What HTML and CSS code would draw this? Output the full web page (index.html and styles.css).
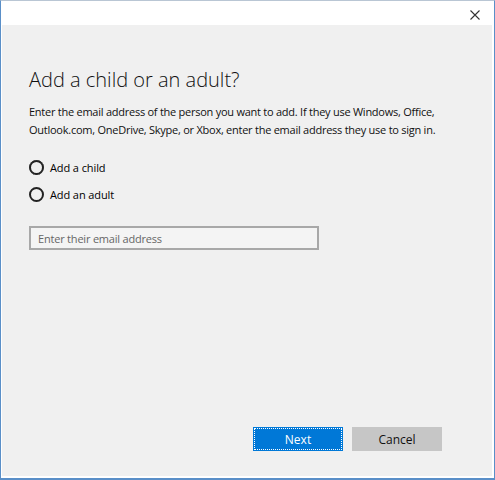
FILE: index.html
```html
<!DOCTYPE html>
<html lang="en">
<head>
    <meta charset="UTF-8">
    <title>Add a child or an adult</title>
    <link rel="stylesheet" href="styles.css">
</head>
<body>

<div class="window">
    <div class="titlebar">
        <button class="close" aria-label="Close">
            <svg width="10" height="10" viewBox="0 0 10 10">
                <path d="M0.5 0.5 L9.5 9.5 M9.5 0.5 L0.5 9.5" stroke="#333" stroke-width="1.1" fill="none"/>
            </svg>
        </button>
    </div>

    <div class="content">
        <h1 class="heading">Add a child or an adult?</h1>
        <p class="intro">Enter the email address of the person you want to add. If they use Windows, Office, Outlook.com, OneDrive, Skype, or Xbox, enter the email address they use to sign in.</p>

        <div class="options">
            <label class="option">
                <span class="radio focused"></span>
                Add a child
            </label>
            <label class="option">
                <span class="radio"></span>
                Add an adult
            </label>
        </div>

        <div class="email">Enter their email address</div>

        <div class="actions">
            <button class="btn primary">Next</button>
            <button class="btn">Cancel</button>
        </div>
    </div>
</div>

</body>
</html>
```

FILE: styles.css
```css
* {
    box-sizing: border-box;
}

body {
    margin: 0;
    width: 495px;
    height: 480px;
    font-family: "Open Sans", "Noto Sans", sans-serif;
    color: #000;
}

.window {
    display: flex;
    flex-direction: column;
    width: 495px;
    height: 480px;
    border: 1px solid #5a8fc8;
    border-top-color: #b9c6d4;
    border-bottom-width: 2px;
    background-color: #fff;
    padding: 0 2px 2px 1px;
}

.titlebar {
    display: flex;
    justify-content: flex-end;
    align-items: center;
    height: 24px;
    background-color: #fff;
}

.close {
    display: flex;
    align-items: center;
    justify-content: center;
    width: 30px;
    height: 24px;
    margin-right: 2px;
    margin-top: 3px;
    padding: 0;
    border: none;
    background: none;
}

.content {
    flex: 1;
    display: flex;
    flex-direction: column;
    background-color: #f0f0f0;
    padding: 42px 28px 25px 27px;
}

.heading {
    margin: 0;
    font-size: 20px;
    font-weight: 300;
    line-height: 26px;
    color: #111;
}

.intro {
    margin: 10px 0 0;
    font-size: 11px;
    line-height: 18px;
    letter-spacing: -0.25px;
    color: #111;
}

.options {
    display: flex;
    flex-direction: column;
    gap: 7px;
    margin-top: 18px;
}

.option {
    display: flex;
    align-items: center;
    gap: 6px;
    height: 20px;
    font-size: 11px;
    letter-spacing: -0.1px;
}

.radio {
    width: 15px;
    height: 15px;
    border: 2px solid #222;
    border-radius: 50%;
}

.radio.focused {
    outline: 1px dotted #333;
    outline-offset: -1px;
}

.email {
    width: 290px;
    height: 24px;
    margin-top: 22px;
    border: 2px solid #a8a8a8;
    background-color: #f4f4f4;
    padding: 2px 7px;
    font-size: 11px;
    line-height: 17px;
    letter-spacing: -0.2px;
    color: #666;
}

.actions {
    display: flex;
    justify-content: flex-end;
    gap: 9px;
    margin-top: auto;
    padding-right: 22px;
}

.btn {
    width: 90px;
    height: 24px;
    border: none;
    background-color: #c6c6c6;
    font-family: inherit;
    font-size: 12px;
    color: #111;
}

.btn.primary {
    background-color: #0078d7;
    color: #fff;
    outline: 1px dotted #fff;
    outline-offset: -2px;
}
```
